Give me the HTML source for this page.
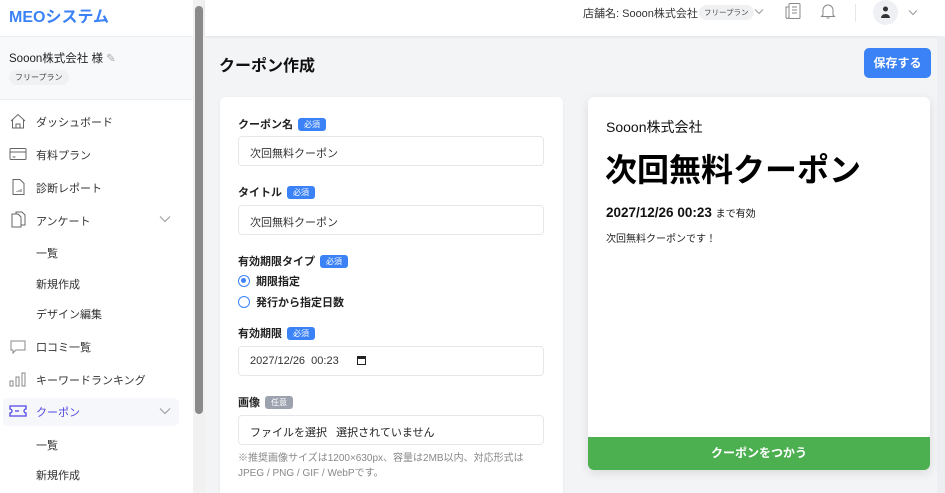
<!DOCTYPE html>
<html><head><meta charset="utf-8">
<style>
*{box-sizing:border-box;margin:0;padding:0}
html,body{width:945px;height:493px;overflow:hidden}
body{background:#f3f4f6;font-family:"Liberation Sans","Noto Sans CJK JP",sans-serif;color:#1f2937;position:relative}
.abs{position:absolute}
#side{left:0;top:0;width:193px;height:493px;background:#fff}
#scroll{left:193px;top:0;width:12px;height:493px;background:#f1f1f1}
#thumb{left:195px;top:6px;width:8px;height:408px;background:#8a8a8a;border-radius:4px}
.logo{left:9px;top:3px;font-size:16px;color:#3b82f6;font-weight:bold}
.user{left:0;top:36px;width:193px;height:64px;background:#f8f9fb;border-top:1px solid #eceef2;border-bottom:1px solid #eceef2}
.mi{position:absolute;left:36px;font-size:11px;color:#333}
.ic{position:absolute;left:9px}
.pill{background:#f0f1f3;border-radius:9px;font-size:8px;color:#444;padding:2px 6px}
#hdr{left:205px;top:0;width:740px;height:36px;background:#fff;box-shadow:0 1px 3px rgba(0,0,0,.08)}
.card{background:#fff;border-radius:6px;box-shadow:0 1px 3px rgba(0,0,0,.06)}
.lbl{position:absolute;left:238px;font-size:11px;color:#222;font-weight:bold}
.bd{display:inline-block;background:#3b82f6;color:#fff;font-size:8px;padding:1px 6px;border-radius:3px;margin-left:5px;vertical-align:1px;font-weight:normal}
.inp{position:absolute;left:238px;width:306px;height:30px;border:1px solid #e5e7eb;border-radius:4px;font-size:11px;padding:8px 11px;color:#333}
.rad{position:absolute;left:238px;font-size:11px;font-weight:bold;color:#222}
.rad i{display:inline-block;width:12px;height:12px;border:1.5px solid #3b82f6;border-radius:50%;vertical-align:-2px;margin-right:6px;position:relative}
</style></head><body>
<div id="side" class="abs">
 <div class="abs logo">MEOシステム</div>
 <div class="abs user">
  <div class="abs" style="left:9px;top:13px;font-size:11.5px;color:#222">Sooon株式会社 様 <span style="color:#aaa">✎</span></div>
  <div class="abs pill" style="left:9px;top:33px">フリープラン</div>
 </div>
 <svg class="ic" style="top:113px" width="18" height="16" viewBox="0 0 18 16" fill="none" stroke="#666" stroke-width="1"><path d="M2 8L9 1.5 16 8M3.5 6.5V15h11V6.5M7 15v-4h4v4"/></svg>
 <div class="mi" style="top:114px">ダッシュボード</div>
 <svg class="ic" style="top:147px" width="18" height="14" viewBox="0 0 18 14" fill="none" stroke="#666"><rect x="1" y="1.5" width="16" height="11" rx="1"/><path d="M1 5h16M3.5 10h3"/></svg>
 <div class="mi" style="top:147px">有料プラン</div>
 <svg class="ic" style="top:178px" width="18" height="18" viewBox="0 0 18 18" fill="none" stroke="#666"><path d="M4 1.5h7l4 4v11H4z"/><path d="M8 14v-1M10 14v-2M12 14v-3" /></svg>
 <div class="mi" style="top:180px">診断レポート</div>
 <svg class="ic" style="top:211px" width="18" height="18" viewBox="0 0 18 18" fill="none" stroke="#666"><path d="M3 3h6l3 3v10H3z"/><path d="M7 3V1h6l3 3v10h-4"/></svg>
 <div class="mi" style="top:213px">アンケート</div>
 <svg class="abs" style="left:159px;top:215px" width="12" height="8" viewBox="0 0 12 8" fill="none" stroke="#999"><path d="M1 1.5l5 5 5-5"/></svg>
 <div class="mi" style="top:245px">一覧</div>
 <div class="mi" style="top:276px">新規作成</div>
 <div class="mi" style="top:306px">デザイン編集</div>
 <svg class="ic" style="top:338px" width="18" height="18" viewBox="0 0 18 18" fill="none" stroke="#888"><path d="M2 3h14v9H7l-3 3v-3H2z"/></svg>
 <div class="mi" style="top:339px">口コミ一覧</div>
 <svg class="ic" style="top:371px" width="18" height="16" viewBox="0 0 18 16" fill="none" stroke="#888"><rect x="1" y="10" width="3" height="5"/><rect x="7" y="6" width="3" height="9"/><rect x="13" y="2" width="3" height="13"/></svg>
 <div class="mi" style="top:372px">キーワードランキング</div>
 <div class="abs" style="left:3px;top:398px;width:176px;height:28px;background:#f6f7fb;border-radius:5px"></div>
 <svg class="ic" style="top:404px" width="18" height="14" viewBox="0 0 18 14" fill="none" stroke="#4f46e5" stroke-width="1.3"><path d="M1 2h16v3a2 2 0 000 4v3H1V9a2 2 0 000-4z"/><path d="M6 7h4"/></svg>
 <div class="mi" style="top:404px;color:#4f46e5">クーポン</div>
 <svg class="abs" style="left:159px;top:407px" width="12" height="8" viewBox="0 0 12 8" fill="none" stroke="#999"><path d="M1 1.5l5 5 5-5"/></svg>
 <div class="mi" style="top:437px">一覧</div>
 <div class="mi" style="top:467px">新規作成</div>
</div>
<div id="scroll" class="abs"></div><div id="thumb" class="abs"></div>
<div id="hdr" class="abs">
 <div class="abs" style="left:378px;top:5px;font-size:11px;color:#333">店舗名: Sooon株式会社</div>
 <div class="abs pill" style="left:494px;top:5px;font-size:7.5px;padding:2px 5px">フリープラン</div>
 <svg class="abs" style="left:549px;top:8px" width="10" height="7" viewBox="0 0 10 7" fill="none" stroke="#999"><path d="M1 1.5l4 4 4-4"/></svg>
 <svg class="abs" style="left:579px;top:2px" width="18" height="18" viewBox="0 0 18 18" fill="none" stroke="#888"><rect x="5" y="1.5" width="11" height="15" rx="1"/><path d="M5 5H2v10a1.5 1.5 0 003 0M8 5h5M8 8h5M8 11h5"/></svg>
 <svg class="abs" style="left:615px;top:2px" width="16" height="18" viewBox="0 0 16 18" fill="none" stroke="#888"><path d="M3 13V8a5 5 0 0110 0v5l1.5 1.5h-13zM6.5 16h3"/></svg>
 <div class="abs" style="left:650px;top:4px;width:1px;height:18px;background:#e5e7eb"></div>
 <div class="abs" style="left:668px;top:0px;width:25px;height:25px;border-radius:50%;background:#eef0f3"></div>
 <svg class="abs" style="left:675px;top:6px" width="11" height="12" viewBox="0 0 11 12" fill="#333"><circle cx="5.5" cy="3" r="2.5"/><path d="M1 12a4.5 4 0 019 0z"/></svg>
 <svg class="abs" style="left:703px;top:9px" width="10" height="7" viewBox="0 0 10 7" fill="none" stroke="#999"><path d="M1 1.5l4 4 4-4"/></svg>
</div>
<div class="abs" style="left:219px;top:52px;font-size:16px;font-weight:bold;color:#111">クーポン作成</div>
<div class="abs" style="left:864px;top:48px;width:67px;height:30px;background:#3b82f6;border-radius:5px;color:#fff;font-size:12px;font-weight:bold;text-align:center;line-height:30px">保存する</div>

<div class="abs card" style="left:220px;top:97px;width:343px;height:396px;border-radius:6px 6px 0 0"></div>
<div class="lbl" style="top:116px">クーポン名<span class="bd">必須</span></div>
<div class="inp" style="top:136px">次回無料クーポン</div>
<div class="lbl" style="top:184px">タイトル<span class="bd">必須</span></div>
<div class="inp" style="top:205px">次回無料クーポン</div>
<div class="lbl" style="top:253px">有効期限タイプ<span class="bd">必須</span></div>
<div class="rad" style="top:273px"><i><b style="position:absolute;left:2px;top:2px;width:5px;height:5px;border-radius:50%;background:#3b82f6"></b></i>期限指定</div>
<div class="rad" style="top:294px"><i></i>発行から指定日数</div>
<div class="lbl" style="top:325px">有効期限<span class="bd">必須</span></div>
<div class="inp" style="top:346px">2027/12/26&nbsp; 00:23 <span style="display:inline-block;width:9px;height:9px;border:1.5px solid #222;border-top-width:3px;margin-left:15px;vertical-align:-1px"></span></div>
<div class="lbl" style="top:394px">画像<span class="bd" style="background:#9ca3af">任意</span></div>
<div class="inp" style="top:415px;color:#222">ファイルを選択&nbsp;&nbsp; 選択されていません</div>
<div class="abs" style="left:238px;top:451px;width:310px;font-size:10px;color:#888;line-height:15px">※推奨画像サイズは1200×630px、容量は2MB以内、対応形式はJPEG / PNG / GIF / WebPです。</div>

<div class="abs card" style="left:588px;top:97px;width:342px;height:373px;overflow:hidden;box-shadow:0 3px 10px rgba(0,0,0,.1)">
 <div class="abs" style="left:18px;top:20px;font-size:14px;color:#111">Sooon株式会社</div>
 <div class="abs" style="left:17px;top:48px;font-size:32px;font-weight:bold;color:#000">次回無料クーポン</div>
 <div class="abs" style="left:18px;top:108px;font-size:13.5px;color:#111;font-weight:bold">2027/12/26 00:23 <span style="font-size:10px;font-weight:normal">まで有効</span></div>
 <div class="abs" style="left:18px;top:133px;font-size:10px;color:#222">次回無料クーポンです！</div>
 <div class="abs" style="left:0;top:340px;width:342px;height:33px;background:#4caf50;color:#fff;font-size:12px;font-weight:bold;text-align:center;line-height:33px">クーポンをつかう</div>
</div>
<div class="abs" style="left:937px;top:36px;width:8px;height:457px;background:#eceef1"></div>
</body></html>
